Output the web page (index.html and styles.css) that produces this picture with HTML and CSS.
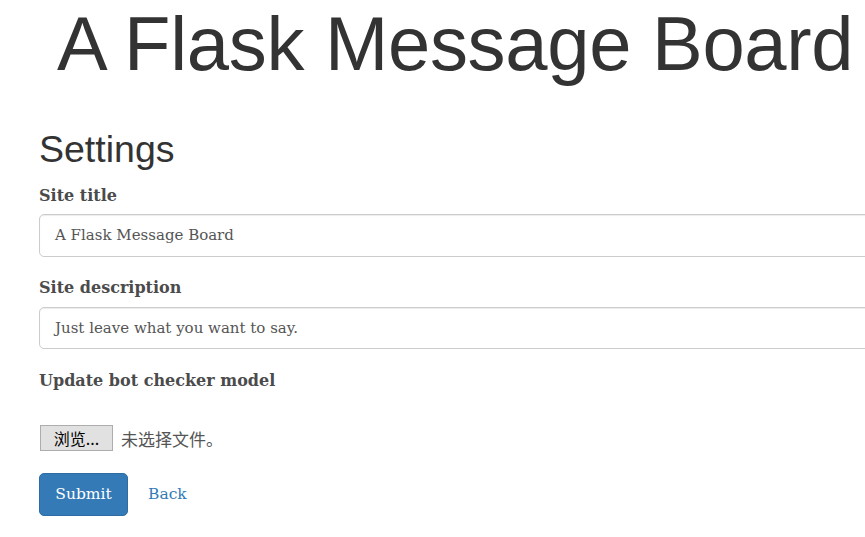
FILE: index.html
```html
<!DOCTYPE html>
<html lang="en">
<head>
<meta charset="utf-8">
<title>Settings - A Flask Message Board</title>
<link rel="stylesheet" href="styles.css">
</head>
<body>
<div class="page">
  <header class="site-header">
    <h1 class="site-title">A Flask Message Board</h1>
  </header>
  <main class="container">
    <h2 class="section-title">Settings</h2>
    <form class="settings-form">
      <div class="form-group">
        <label class="form-label">Site title</label>
        <div class="form-control">A Flask Message Board</div>
      </div>
      <div class="form-group">
        <label class="form-label">Site description</label>
        <div class="form-control">Just leave what you want to say.</div>
      </div>
      <div class="form-group file-group">
        <label class="form-label">Update bot checker model</label>
        <div class="file-input">
          <span class="file-button">浏览...</span>
          <span class="file-status">未选择文件。</span>
        </div>
      </div>
      <div class="actions">
        <span class="btn btn-primary">Submit</span>
        <a class="btn btn-link" href="#">Back</a>
      </div>
    </form>
  </main>
</div>
</body>
</html>
```
FILE: styles.css
```css
html, body {
  margin: 0;
  padding: 0;
  overflow: hidden;
  background: #fff;
}
body {
  font-family: "DejaVu Serif", Georgia, serif;
  font-size: 16px;
  color: #333;
}
.page {
  width: 1000px;
}
.site-header {
  padding-left: 57px;
  padding-top: 1px;
}
.site-title {
  margin: 0;
  font-family: "Liberation Sans", Arial, sans-serif;
  font-weight: normal;
  font-size: 76px;
  line-height: 85px;
  letter-spacing: -0.3px;
  color: #333;
  white-space: nowrap;
}
.container {
  padding-left: 39px;
  width: 940px;
}
.section-title {
  margin: 43px 0 12.5px 0;
  font-family: "Liberation Sans", Arial, sans-serif;
  font-weight: normal;
  font-size: 37.5px;
  line-height: 41.25px;
  color: #333;
}
.settings-form {
  display: flex;
  flex-direction: column;
}
.form-group {
  margin-bottom: 18.75px;
  display: flex;
  flex-direction: column;
}
.form-label {
  display: block;
  font-weight: bold;
  font-size: 16px;
  line-height: 25px;
  margin-bottom: 6.25px;
  color: #4b4b4b;
}
.form-control {
  box-sizing: border-box;
  height: 42.5px;
  padding: 0 15px;
  display: flex;
  align-items: center;
  border: 1px solid #ccc;
  border-radius: 5px;
  color: #555;
  font-size: 15px;
  box-shadow: inset 0 1px 1px rgba(0,0,0,.075);
}
.file-group {
  margin-bottom: 22px;
}
.file-input {
  display: flex;
  align-items: center;
  gap: 8px;
  padding-top: 26px;
}
.file-button {
  box-sizing: border-box;
  height: 26px;
  width: 73px;
  margin-left: 1px;
  display: flex;
  align-items: center;
  justify-content: center;
  background: #e1e1e1;
  border: 1px solid #adadad;
  color: #000;
  font-family: "Noto Sans CJK SC", sans-serif;
  font-size: 16px;
}
.file-status {
  font-family: "Noto Sans CJK SC", sans-serif;
  font-size: 17px;
  color: #555;
}
.actions {
  display: flex;
  align-items: center;
  gap: 4px;
}
.btn {
  box-sizing: border-box;
  height: 42.5px;
  padding: 0 15px;
  display: inline-flex;
  align-items: center;
  font-size: 15.5px;
  border: 1px solid transparent;
  border-radius: 5px;
  text-decoration: none;
}
.btn-primary {
  background: #337ab7;
  border-color: #2e6da4;
  color: #fff;
  width: 89px;
  justify-content: center;
}
.btn-link {
  color: #337ab7;
}
```
